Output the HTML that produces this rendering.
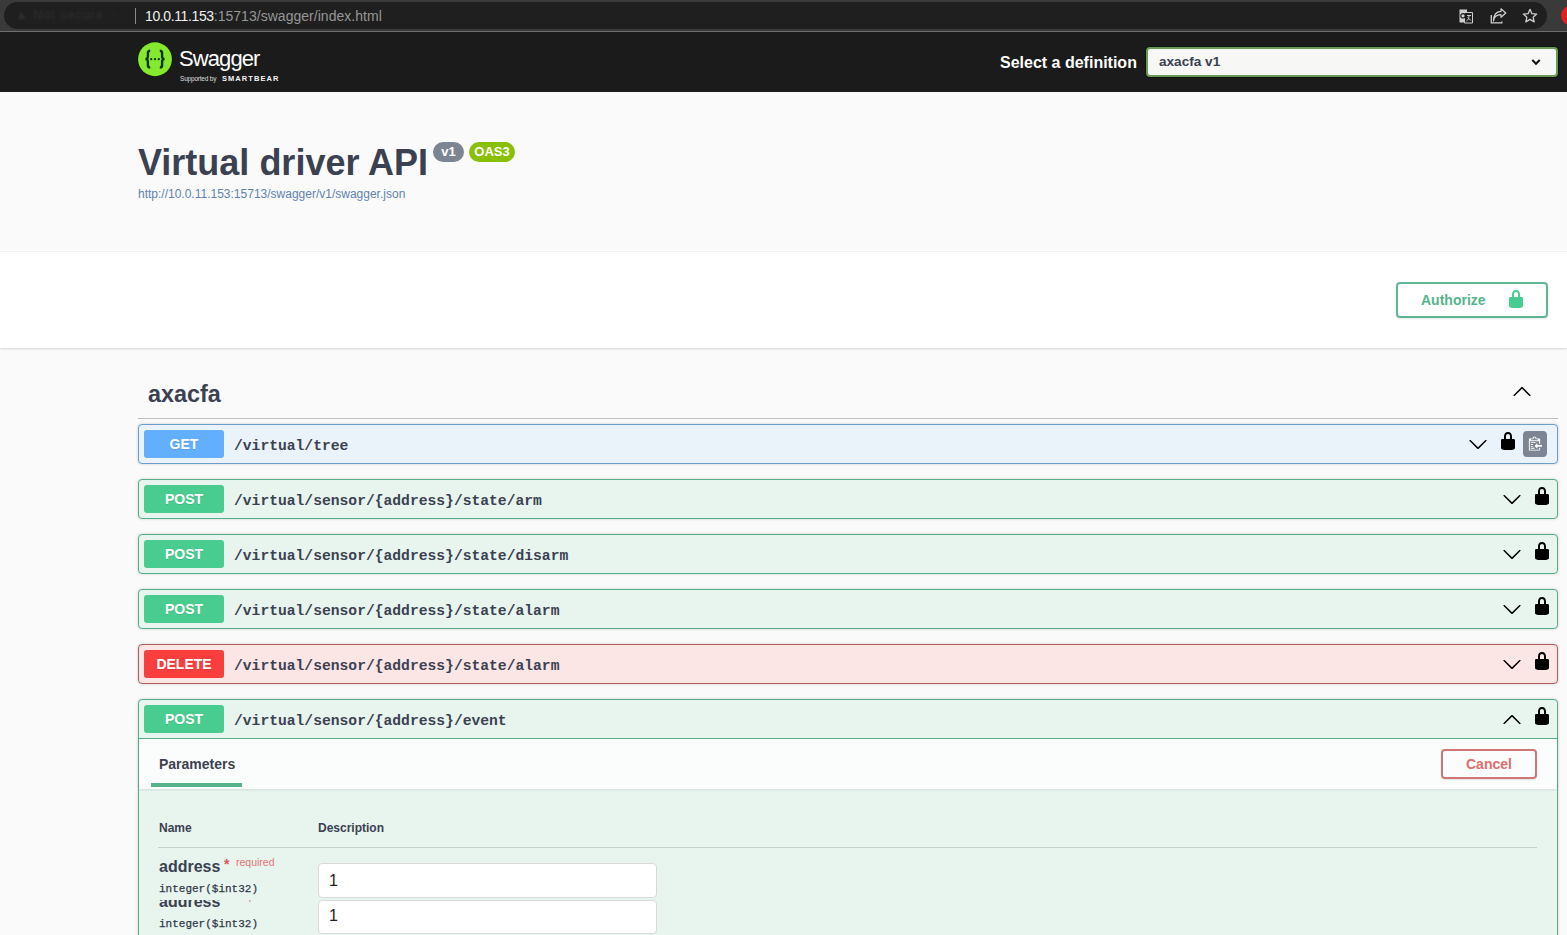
<!DOCTYPE html>
<html><head><meta charset="utf-8">
<style>
*{box-sizing:border-box;margin:0;padding:0}
html,body{width:1567px;height:935px;overflow:hidden;background:#fafafa;font-family:"Liberation Sans",sans-serif;color:#3b4151;position:relative}
.abs{position:absolute;white-space:nowrap}
#chrome{left:0;top:0;width:1567px;height:31px;background:#3a3a3a}
#pill{left:4px;top:2px;width:1543px;height:27px;background:#1f1f1f;border-radius:14px}
#tabblur{left:15px;top:7px;font-size:13px;line-height:16px;color:#2f2f2f;letter-spacing:0.8px;filter:blur(1.2px)}
#cline{left:0;top:31px;width:1567px;height:1px;background:#6e6e6e}
#topbar{left:0;top:32px;width:1567px;height:60px;background:#1b1b1b}
#scheme{left:0;top:252px;width:1567px;height:96px;background:#fff;box-shadow:0 1px 2px 0 rgba(0,0,0,.15)}
.title{left:138px;top:140.5px;font-size:36px;font-weight:700;line-height:44px;color:#3b4151}
.badge{font-size:13px;font-weight:700;color:#fff;border-radius:57px;height:20px;line-height:20px;text-align:center}
.link{left:138px;top:187px;font-size:12px;line-height:14px;color:#5f82b0}
.ob{left:138px;width:1420px;height:40px;border-radius:4px;border:1px solid;box-shadow:0 0 3px rgba(0,0,0,.19)}
.ob.get{background:#ebf3fa;border-color:#6a9fcc}
.ob.post{background:#e8f5ef;border-color:#55b08a}
.ob.del{background:#fce5e5;border-color:#b85c5e}
.method{position:absolute;left:5px;top:5px;width:80px;height:28px;border-radius:3px;color:#fff;font-weight:700;font-size:14px;line-height:28px;text-align:center;text-shadow:0 1px 0 rgba(0,0,0,.1)}
.get .method{background:#61affe}
.post .method{background:#49cc90}
.del .method{background:#f93e3e}
.path{position:absolute;left:95px;top:2px;line-height:38px;font-family:"Liberation Mono",monospace;font-weight:700;font-size:14.67px;color:#3b4151}
.chev{position:absolute;width:20px;height:20px}
.lock{position:absolute;width:20px;height:20px}
</style></head><body>
<svg width="0" height="0" style="position:absolute">
<defs>
<symbol id="locked" viewBox="0 0 20 20"><path d="M15.8 8H14V5.6C14 2.703 12.665 1 10 1 7.334 1 6 2.703 6 5.6V8H4c-.553 0-1 .646-1 1.199V17c0 .549.428 1.139.951 1.307l1.197.387C5.672 18.861 6.55 19 7.1 19h5.8c.549 0 1.428-.139 1.951-.307l1.196-.387c.524-.167.953-.757.953-1.306V9.199C17 8.646 16.352 8 15.8 8zM12 8H8V5.199C8 3.754 8.797 3 10 3c1.203 0 2 .754 2 2.199V8z"/></symbol>
<symbol id="down" viewBox="0 0 20 20"><path d="M17.418 6.109c.272-.268.709-.268.979 0s.271.701 0 .969l-7.908 7.83c-.27.268-.707.268-.979 0l-7.908-7.83c-.27-.268-.27-.701 0-.969.271-.268.709-.268.979 0L10 13.25l7.418-7.141z"/></symbol>
<symbol id="up" viewBox="0 0 20 20"><path d="M17.418 14.908c.272.268.709.268.979 0s.271-.701 0-.969l-7.908-7.83c-.27-.268-.707-.268-.979 0l-7.908 7.83c-.27.268-.27.701 0 .969.271.268.709.268.979 0L10 7.767l7.418 7.141z"/></symbol>
</defs></svg>

<div id="chrome" class="abs"></div>
<div id="pill" class="abs"></div>
<div id="tabblur" class="abs">&#9650; Not secure &#9675;</div>
<div class="abs" style="left:135px;top:8px;width:1px;height:16px;background:#8a8a8a"></div>
<div class="abs" style="left:145px;top:6.5px;font-size:14px;line-height:18px;color:#f0f0f0"><span id="u1" style="letter-spacing:-0.38px">10.0.11.153</span><span id="u2" style="color:#969696;letter-spacing:0.03px">:15713/swagger/index.html</span></div>
<svg class="abs" style="left:1456px;top:6px" width="20" height="20" viewBox="0 0 20 20">
<path d="M3.5 3.5h7.5v13h-7.5z" fill="#cfcfcf"/>
<path d="M8.5 6.5h8v10.5h-8z" fill="#1f1f1f" stroke="#cfcfcf" stroke-width="1"/>
<circle cx="7" cy="9.8" r="2.2" fill="none" stroke="#1f1f1f" stroke-width="1.2"/>
<path d="M11 9.5h4M13 9.5c0 3 -1 4.5 -2.5 5.5M11.8 11.5l3 3" fill="none" stroke="#cfcfcf" stroke-width="1"/>
</svg>
<svg class="abs" style="left:1489px;top:6px" width="20" height="20" viewBox="0 0 20 20">
<path d="M2.3 9v7.9h10.5v-1.5" fill="none" stroke="#cfcfcf" stroke-width="1.3"/>
<path d="M4.5 15c0.5-4 3-6.2 7.5-6.3v2.6l4.8-4.3-4.8-4.2v2.5c-5 0.3-7.5 3.8-7.5 9.7z" fill="none" stroke="#cfcfcf" stroke-width="1.2" stroke-linejoin="round"/>
</svg>
<svg class="abs" style="left:1520px;top:6px" width="20" height="20" viewBox="0 0 20 20">
<path d="M10 3.3l1.9 4.4 4.8.4-3.6 3.1 1.1 4.7L10 13.4l-4.2 2.5 1.1-4.7-3.6-3.1 4.8-.4z" fill="none" stroke="#cfcfcf" stroke-width="1.3" stroke-linejoin="round"/>
</svg>
<div class="abs" style="left:1561px;top:6px;width:20px;height:19px;border-radius:50%;background:#e0201e"></div>
<div id="cline" class="abs"></div>

<div id="topbar" class="abs"></div>
<!-- logo -->
<svg class="abs" style="left:136px;top:40px" width="38" height="38" viewBox="0 0 38 38">
<circle cx="19" cy="19.25" r="17.6" fill="#0a1a05"/>
<circle cx="19" cy="19.25" r="16.9" fill="#85ea2d"/>
<path d="M14.2 10.8 C12.4 10.8 11.9 11.6 11.9 13.2 L11.9 16.6 C11.9 18.2 11.2 19.1 9.4 19.1 C11.2 19.1 11.9 20 11.9 21.6 L11.9 25.3 C11.9 26.9 12.4 27.6 14.2 27.6" fill="none" stroke="#0c3310" stroke-width="2.4"/>
<path d="M23.8 10.8 C25.6 10.8 26.1 11.6 26.1 13.2 L26.1 16.6 C26.1 18.2 26.8 19.1 28.6 19.1 C26.8 19.1 26.1 20 26.1 21.6 L26.1 25.3 C26.1 26.9 25.6 27.6 23.8 27.6" fill="none" stroke="#0c3310" stroke-width="2.4"/>
<circle cx="15.2" cy="19.2" r="1.15" fill="#0c3310"/>
<circle cx="19" cy="19.2" r="1.15" fill="#0c3310"/>
<circle cx="22.8" cy="19.2" r="1.15" fill="#0c3310"/>
</svg>
<div class="abs" style="left:179px;top:46px;font-size:22px;line-height:26px;color:#fff;letter-spacing:-0.9px">Swagger</div>
<div class="abs" style="left:180px;top:74.5px;font-size:6.5px;line-height:8px;color:#ddd;letter-spacing:-0.2px">Supported by</div>
<div class="abs" style="left:222px;top:74.5px;font-weight:700;font-size:7.5px;line-height:8px;letter-spacing:1.05px;color:#f4f4f4">SMARTBEAR</div>

<div class="abs" style="left:1000px;top:52.5px;font-size:16px;line-height:20px;font-weight:700;color:#fff">Select a definition</div>
<div class="abs" style="left:1146px;top:47px;width:412px;height:30px;border:2px solid #6c9a55;border-radius:4px;background:#f7f7f5;box-shadow:0 0 1px 1px rgba(0,20,0,.6)"></div>
<div class="abs" style="left:1159px;top:53px;font-size:13.6px;line-height:18px;font-weight:700;color:#3b4151">axacfa v1</div>
<svg class="abs" style="left:1528px;top:55px" width="16" height="12" viewBox="0 0 16 12"><path d="M4.3 5 L8 8.8 L11.7 5" fill="none" stroke="#111" stroke-width="2"/></svg>

<div class="abs title">Virtual driver API</div>
<div class="abs badge" style="left:433px;top:142px;width:31px;background:#7d8492">v1</div>
<div class="abs badge" style="left:469px;top:142px;width:46px;background:#89bf04">OAS3</div>
<div class="abs link">http://10.0.11.153:15713/swagger/v1/swagger.json</div>

<div id="scheme" class="abs"></div>
<div class="abs" style="left:0;top:251px;width:1567px;height:1px;background:#f0f0f0"></div>
<div class="abs" style="left:1396px;top:282px;width:152px;height:36px;border:2px solid #5db891;border-radius:4px;box-shadow:0 1px 2px rgba(0,0,0,.1)"></div>
<div class="abs" style="left:1421px;top:292px;font-size:14px;line-height:16px;font-weight:700;color:#55b68b">Authorize</div>
<svg class="abs" style="left:1506px;top:289px;fill:#49cc90" width="20" height="20"><use href="#locked"/></svg>

<!-- tag -->
<div class="abs" style="left:148px;top:379.5px;font-size:23.4px;line-height:28px;font-weight:700;color:#3b4151">axacfa</div>
<svg class="abs" style="left:1512px;top:381px;fill:#000" width="20" height="20"><use href="#up"/></svg>
<div class="abs" style="left:138px;top:418px;width:1420px;height:1px;background:rgba(59,65,81,.3)"></div>

<div class="abs ob get" style="top:424px"><div class="method">GET</div><div class="path">/virtual/tree</div>
<svg class="chev" style="left:1329px;top:9px;fill:#000"><use href="#down"/></svg>
<svg class="lock" style="left:1359px;top:6px;fill:#000"><use href="#locked"/></svg>
<div style="position:absolute;left:1384px;top:6px;width:24px;height:26px;border-radius:4px;background:#7d8492"></div>
<svg style="position:absolute;left:1387.5px;top:11px" width="15" height="16" viewBox="0 0 16 16"><g transform="translate(2,-1)"><path fill="#fff" fill-rule="evenodd" d="M2 13h4v1H2v-1zm5-6H2v1h5V7zm2 3V8l-3 3 3 3v-2h5v-2H9zM4.5 9H2v1h2.5V9zM2 12h2.5v-1H2v1zm9 1h1v2c-.02.28-.11.52-.3.7-.19.18-.42.28-.7.3H1c-.55 0-1-.45-1-1V4c0-.55.45-1 1-1h3c0-1.110.89-2 2-2 1.11 0 2 .89 2 2h3c.55 0 1 .45 1 1v5h-1V6H1v9h10v-2zM2 5h8c0-.55-.45-1-1-1H8c-.55 0-1-.45-1-1s-.45-1-1-1-1 .45-1 1-.45 1-1 1H3c-.55 0-1 .45-1 1z"/></g></svg>
</div>
<div class="abs ob post" style="top:479px"><div class="method">POST</div><div class="path">/virtual/sensor/{address}/state/arm</div>
<svg class="chev" style="left:1363px;top:9px;fill:#000"><use href="#down"/></svg>
<svg class="lock" style="left:1393px;top:6px;fill:#000"><use href="#locked"/></svg></div>
<div class="abs ob post" style="top:534px"><div class="method">POST</div><div class="path">/virtual/sensor/{address}/state/disarm</div>
<svg class="chev" style="left:1363px;top:9px;fill:#000"><use href="#down"/></svg>
<svg class="lock" style="left:1393px;top:6px;fill:#000"><use href="#locked"/></svg></div>
<div class="abs ob post" style="top:589px"><div class="method">POST</div><div class="path">/virtual/sensor/{address}/state/alarm</div>
<svg class="chev" style="left:1363px;top:9px;fill:#000"><use href="#down"/></svg>
<svg class="lock" style="left:1393px;top:6px;fill:#000"><use href="#locked"/></svg></div>
<div class="abs ob del" style="top:644px"><div class="method">DELETE</div><div class="path">/virtual/sensor/{address}/state/alarm</div>
<svg class="chev" style="left:1363px;top:9px;fill:#000"><use href="#down"/></svg>
<svg class="lock" style="left:1393px;top:6px;fill:#000"><use href="#locked"/></svg></div>
<div class="abs ob post" style="top:699px;height:260px"><div class="method">POST</div><div class="path">/virtual/sensor/{address}/event</div>
<svg class="chev" style="left:1363px;top:9px;fill:#000"><use href="#up"/></svg>
<svg class="lock" style="left:1393px;top:6px;fill:#000"><use href="#locked"/></svg></div>
<!-- expanded body -->
<div class="abs" style="left:139px;top:738px;width:1418px;height:1px;background:#55b08a"></div>
<div class="abs" style="left:139px;top:739px;width:1418px;height:50px;background:rgba(255,255,255,.8);box-shadow:0 1px 2px rgba(0,0,0,.1)"></div>
<div class="abs" style="left:159px;top:756px;font-size:14px;line-height:16px;font-weight:700;color:#3b4151">Parameters</div>
<div class="abs" style="left:151px;top:783px;width:91px;height:4px;background:#55b48b"></div>
<div class="abs" style="left:1441px;top:749px;width:96px;height:30px;border:2px solid #cf7777;border-radius:4px;box-shadow:0 1px 2px rgba(0,0,0,.1)"></div>
<div class="abs" style="left:1466px;top:756px;font-size:14px;line-height:16px;font-weight:700;color:#de6e6e">Cancel</div>

<div class="abs" style="left:159px;top:821px;font-size:12px;line-height:14px;font-weight:700;color:#3b4151">Name</div>
<div class="abs" style="left:318px;top:821px;font-size:12px;line-height:14px;font-weight:700;color:#3b4151">Description</div>
<div class="abs" style="left:158px;top:847px;width:1379px;height:1px;background:rgba(59,65,81,.2)"></div>

<div class="abs" style="left:159px;top:858px;font-size:16px;line-height:18px;font-weight:700;color:#3b4151">address</div>
<div class="abs" style="left:224px;top:856px;font-size:14px;line-height:16px;font-weight:700;color:#e05555">*</div>
<div class="abs" style="left:236px;top:856.3px;font-size:10.5px;line-height:12px;color:#e57373">required</div>
<div class="abs" style="left:159px;top:881.5px;font-family:'Liberation Mono',monospace;font-size:11px;line-height:14px;font-weight:400;color:#2b3141;-webkit-text-stroke:0.25px #3b4151">integer($int32)</div>
<div class="abs" style="left:318px;top:863px;width:339px;height:35px;background:#fff;border:1px solid #d9d9d9;border-radius:4px"></div>
<div class="abs" style="left:329px;top:872px;font-size:16px;line-height:18px;color:#222">1</div>

<div class="abs" style="left:139px;top:900px;width:1418px;height:35px;overflow:hidden">
<div class="abs" style="left:20px;top:-7px;font-size:16px;line-height:18px;font-weight:700;color:#3b4151">address</div>
<div class="abs" style="left:97px;top:-9.7px;font-size:10.5px;line-height:12px;color:#e57373">required</div>
<div class="abs" style="left:20px;top:16.5px;font-family:'Liberation Mono',monospace;font-size:11px;line-height:14px;font-weight:400;color:#2b3141;-webkit-text-stroke:0.25px #3b4151">integer($int32)</div>
<div class="abs" style="left:179px;top:-0.5px;width:339px;height:34px;background:#fff;border:1px solid #d9d9d9;border-radius:4px"></div>
<div class="abs" style="left:190px;top:7px;font-size:16px;line-height:18px;color:#222">1</div>
</div>
</body></html>
